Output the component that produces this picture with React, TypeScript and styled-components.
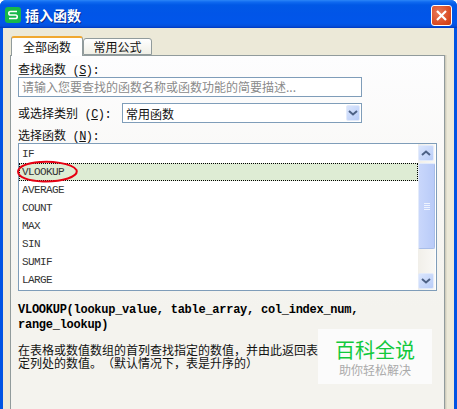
import React from "react";
import styled, { createGlobalStyle } from "styled-components";

const cjk = `"Liberation Mono", "Noto Sans CJK SC", monospace`;

const Global = createGlobalStyle`
  html, body { margin: 0; padding: 0; background: #fff; }
  * { box-sizing: border-box; }
`;

const Win = styled.div`
  width: 457px;
  height: 409px;
  overflow: hidden;
  display: flex;
  flex-direction: column;
  border-radius: 6px 6px 0 0;
  background: #0054e3;
  font-family: ${cjk};
  font-size: 12px;
  color: #111;
`;
const TitleBar = styled.div`
  height: 28px;
  flex: none;
  display: flex;
  align-items: center;
  padding: 2px 5px 0 5px;
  gap: 4px;
  background: linear-gradient(180deg, #2b86f7 0, #0f6af0 2px, #0058e6 5px, #0155e8 14px, #0156ea 23px, #0450dc 26px, #0038c0 28px);
`;
const Logo = styled.svg`
  width: 16px;
  height: 16px;
  flex: none;
`;
const Title = styled.div`
  font-family: "Noto Sans CJK SC", sans-serif;
  font-weight: 700;
  font-size: 14px;
  line-height: 16px;
  color: #fff;
  text-shadow: 1px 1px 0 #0a2a8a;
  flex: 1;
`;
const Close = styled.div`
  width: 21px;
  height: 21px;
  border: 1px solid #fff;
  border-radius: 3px;
  background: radial-gradient(circle at 35% 35%, #e8795a, #d9481f 70%, #c63d14);
  display: flex;
  align-items: center;
  justify-content: center;
`;
const Body = styled.div`
  flex: 1;
  min-height: 0;
  margin: 0 3px;
  background: #ece9d8;
  padding: 8px 9px 0 7px;
  display: flex;
  flex-direction: column;
`;
const Tabs = styled.div`
  display: flex;
  align-items: flex-end;
  padding-left: 1px;
  height: 19px;
  flex: none;
  position: relative;
  z-index: 1;
`;
const Tab = styled.div<{ $active?: boolean }>`
  width: ${(p) => (p.$active ? "72px" : "69px")};
  height: ${(p) => (p.$active ? "20px" : "17px")};
  margin-bottom: ${(p) => (p.$active ? "-1px" : "0")};
  border: 1px solid #919b9c;
  border-bottom: ${(p) => (p.$active ? "none" : "1px solid #919b9c")};
  border-top: ${(p) => (p.$active ? "2px solid #f0a830" : "1px solid #919b9c")};
  border-radius: 3px 3px 0 0;
  background: ${(p) => (p.$active ? "#fff" : "linear-gradient(180deg,#fff,#f0efe6)")};
  font-family: "Noto Sans CJK SC", sans-serif;
  font-size: 12px;
  line-height: ${(p) => (p.$active ? "18px" : "16px")};
  text-align: center;
  color: #111;
`;
const Panel = styled.div`
  flex: 1;
  border: 1px solid #919b9c;
  border-bottom: none;
  background: linear-gradient(180deg, #fdfdfe 0, #f9f8f6 120px, #f4f3ee 250px);
  box-shadow: 1px 0 0 #d0cdbd, 2px 0 0 #e0ddcc;
  padding: 5px 7px 0 7px;
  display: flex;
  flex-direction: column;
  min-height: 0;
`;
const Label = styled.div`
  height: 16px;
  line-height: 16px;
  white-space: nowrap;
  font-size: 12px;
  letter-spacing: -0.6px;
`;
const Cjk = styled.span`
  font-family: "Noto Sans CJK SC", sans-serif;
  letter-spacing: 0;
`;
const Key = styled.span`
  text-decoration: underline;
`;
const TextBox = styled.div`
  width: 344px;
  height: 20px;
  border: 1px solid #7f9db9;
  background: #fff;
  padding-left: 3px;
  line-height: 18px;
  font-family: "Noto Sans CJK SC", sans-serif;
  color: #8a8a8a;
  white-space: nowrap;
`;
const CategoryRow = styled.div`
  display: flex;
  align-items: center;
  justify-content: space-between;
  width: 344px;
  height: 20px;
  margin-top: 6px;
  margin-bottom: 4px;
`;
const Select = styled.div`
  width: 240px;
  height: 20px;
  border: 1px solid #7f9db9;
  background: #fff;
  padding: 1px 1px 1px 3px;
  display: flex;
  align-items: center;
  justify-content: space-between;
  font-family: "Noto Sans CJK SC", sans-serif;
`;
const ArrowButton = styled.div<{ $tall?: boolean }>`
  width: ${(p) => (p.$tall ? "16px" : "14px")};
  height: 16px;
  flex: none;
  border: 1px solid #e3ebfb;
  border-radius: 2px;
  background: linear-gradient(135deg, #dbe6fd, #b9cdf8);
  display: flex;
  align-items: center;
  justify-content: center;
`;
const ListBox = styled.div`
  position: relative;
  width: 419px;
  height: 148px;
  flex: none;
  border: 1px solid #7f9db9;
  background: #fff;
  display: flex;
`;
const Rows = styled.div`
  flex: 1;
  padding-top: 1px;
  min-width: 0;
`;
const Row = styled.div<{ $selected?: boolean }>`
  height: 18px;
  line-height: 18px;
  padding-left: 3px;
  font-size: 11px;
  letter-spacing: -0.6px;
  color: #333;
  background: ${(p) => (p.$selected ? "#deecd4" : "transparent")};
  outline: ${(p) => (p.$selected ? "1px dotted #000" : "none")};
  outline-offset: -1px;
`;
const Scroll = styled.div`
  width: 17px;
  margin-right: 1px;
  padding: 1px 0;
  flex: none;
  display: flex;
  flex-direction: column;
  background: linear-gradient(90deg, #f1efe9, #f9f8f5);
`;
const Thumb = styled.div`
  height: 86px;
  margin-top: 2px;
  border: 1px solid #e3ebfb;
  border-right-color: #a8bde8;
  border-bottom-color: #a8bde8;
  border-radius: 2px;
  background: linear-gradient(90deg, #c9d7fb, #b9cbf8);
  display: flex;
  flex-direction: column;
  align-items: center;
  justify-content: center;
  gap: 1px;
`;
const Grip = styled.div`
  width: 6px;
  height: 1px;
  background: #eef3fe;
`;
const Spacer = styled.div`
  flex: 1;
`;
const Ring = styled.svg`
  position: absolute;
  left: -3px;
  top: 16px;
  width: 64px;
  height: 24px;
  pointer-events: none;
`;
const Signature = styled.div`
  margin-top: 12px;
  font-weight: 700;
  font-size: 12px;
  line-height: 15px;
  letter-spacing: -0.26px;
  color: #000;
  white-space: nowrap;
`;
const Description = styled.div`
  margin-top: 10px;
  font-family: "Noto Sans CJK SC", sans-serif;
  font-size: 12px;
  line-height: 13px;
  color: #111;
  white-space: nowrap;
  text-spacing-trim: space-all;
`;
const Stamp = styled.div`
  position: absolute;
  left: 318px;
  top: 329px;
  width: 114px;
  height: 55px;
  background: #fbfbfb;
  display: flex;
  flex-direction: column;
  align-items: center;
  padding-top: 9px;
  font-family: "Noto Sans CJK SC", sans-serif;
`;
const StampTitle = styled.div`
  font-size: 20px;
  line-height: 24px;
  font-weight: 400;
  color: #12c93c;
`;
const StampSub = styled.div`
  font-size: 12px;
  line-height: 14px;
  color: #aaa;
  margin-top: 1px;
`;

const Chevron = ({ up }: { up?: boolean }) => (
  <svg width="10" height="6" viewBox="0 0 10 6">
    <polyline
      points={up ? "1,5 5,1.5 9,5" : "1,1 5,4.5 9,1"}
      fill="none"
      stroke="#4d6185"
      strokeWidth="2"
    />
  </svg>
);

const functions = ["IF", "VLOOKUP", "AVERAGE", "COUNT", "MAX", "SIN", "SUMIF", "LARGE"];

export default function App() {
  return (
    <Win>
      <Global />
      <TitleBar>
        <Logo viewBox="0 0 16 16">
          <rect width="16" height="16" rx="3" fill="#17b84a" />
          <path d="M12 4.5H5.5a1.6 1.6 0 0 0 0 3.5h5a1.6 1.6 0 0 1 0 3.5H4" fill="none" stroke="#fff" strokeWidth="1.6" />
        </Logo>
        <Title>插入函数</Title>
        <Close>
          <svg width="13" height="13" viewBox="0 0 13 13">
            <path d="M2 2L11 11M11 2L2 11" stroke="#fff" strokeWidth="2.2" />
          </svg>
        </Close>
      </TitleBar>
      <Body>
        <Tabs>
          <Tab $active>全部函数</Tab>
          <Tab>常用公式</Tab>
        </Tabs>
        <Panel>
          <Label>
            <Cjk>查找函数</Cjk> (<Key>S</Key>):
          </Label>
          <TextBox>请输入您要查找的函数名称或函数功能的简要描述...</TextBox>
          <CategoryRow>
            <Label>
              <Cjk>或选择类别</Cjk> (<Key>C</Key>):
            </Label>
            <Select>
              常用函数
              <ArrowButton>
                <Chevron />
              </ArrowButton>
            </Select>
          </CategoryRow>
          <Label>
            <Cjk>选择函数</Cjk> (<Key>N</Key>):
          </Label>
          <ListBox>
            <Rows>
              {functions.map((f) => (
                <Row key={f} $selected={f === "VLOOKUP"}>
                  {f}
                </Row>
              ))}
            </Rows>
            <Scroll>
              <ArrowButton $tall>
                <Chevron up />
              </ArrowButton>
              <Thumb>
                <Grip />
                <Grip />
                <Grip />
                <Grip />
              </Thumb>
              <Spacer />
              <ArrowButton $tall>
                <Chevron />
              </ArrowButton>
            </Scroll>
            <Ring viewBox="0 0 64 24">
              <path
                d="M20 2.5C34 0.5 56 3 60.5 10C63 17 46 22 27 21.5C12 21 2 17 2 11.5C3 6 12 3 24 2"
                fill="none"
                stroke="#e60012"
                strokeWidth="2"
              />
            </Ring>
          </ListBox>
          <Signature>
            VLOOKUP(lookup_value, table_array, col_index_num,
            <br />
            range_lookup)
          </Signature>
          <Description>
            在表格或数值数组的首列查找指定的数值，并由此返回表
            <br />
            定列处的数值。（默认情况下，表是升序的）
          </Description>
        </Panel>
      </Body>
      <Stamp>
        <StampTitle>百科全说</StampTitle>
        <StampSub>助你轻松解决</StampSub>
      </Stamp>
    </Win>
  );
}
